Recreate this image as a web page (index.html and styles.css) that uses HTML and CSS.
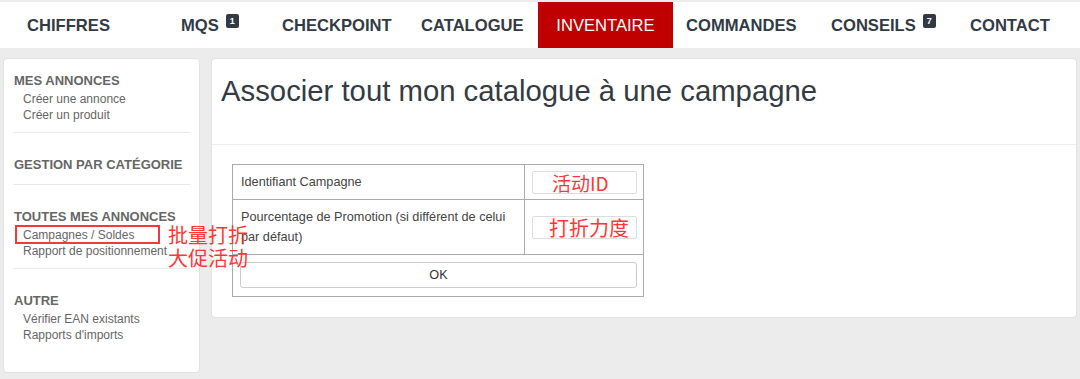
FILE: index.html
```html
<!DOCTYPE html>
<html lang="fr">

<head>
    <meta charset="UTF-8">
    <title>Inventaire - Campagnes</title>
    <link rel="stylesheet" href="styles.css">
</head>

<body>
    <nav class="top-nav">
        <a class="nav-item nav-chiffres" href="#">CHIFFRES</a>
        <a class="nav-item nav-mqs" href="#">MQS <span class="badge">1</span></a>
        <a class="nav-item nav-checkpoint" href="#">CHECKPOINT</a>
        <a class="nav-item nav-catalogue" href="#">CATALOGUE</a>
        <a class="nav-item nav-inventaire active" href="#">INVENTAIRE</a>
        <a class="nav-item nav-commandes" href="#">COMMANDES</a>
        <a class="nav-item nav-conseils" href="#">CONSEILS <span class="badge">7</span></a>
        <a class="nav-item nav-contact" href="#">CONTACT</a>
    </nav>

    <div class="page">
        <aside class="sidebar">
            <div class="side-section first">
                <h4>MES ANNONCES</h4>
                <a href="#">Créer une annonce</a>
                <a href="#">Créer un produit</a>
            </div>
            <div class="side-section">
                <h4>GESTION PAR CATÉGORIE</h4>
            </div>
            <div class="side-section">
                <h4>TOUTES MES ANNONCES</h4>
                <a class="marked" href="#">Campagnes / Soldes
                    <!-- annotation added on the screenshot -->
                    <span class="mark-box"></span>
                    <span class="mark-note">批量打折<br>大促活动</span>
                </a>
                <a href="#">Rapport de positionnement</a>
            </div>
            <div class="side-section last">
                <h4>AUTRE</h4>
                <a href="#">Vérifier EAN existants</a>
                <a href="#">Rapports d'imports</a>
            </div>
        </aside>

        <main class="panel">
            <div class="panel-head">
                <h1>Associer tout mon catalogue à une campagne</h1>
            </div>
            <div class="panel-body">
                <table class="form-table">
                    <tr class="row-id">
                        <td class="label">Identifiant Campagne</td>
                        <td class="field"><div class="fake-input"><span class="hint hint-id">活动ID</span></div></td>
                    </tr>
                    <tr class="row-promo">
                        <td class="label">Pourcentage de Promotion (si différent de celui par défaut)</td>
                        <td class="field"><div class="fake-input"><span class="hint">打折力度</span></div></td>
                    </tr>
                    <tr>
                        <td class="submit" colspan="2"><button type="submit">OK</button></td>
                    </tr>
                </table>
            </div>
        </main>
    </div>
</body>

</html>
```

FILE: styles.css
```css
body {
    margin: 0;
    background: #ececec;
    font-family: "Liberation Sans", Arial, sans-serif;
    color: #333;
}

a {
    text-decoration: none;
}

/* top menu */
.top-nav {
    display: flex;
    align-items: stretch;
    height: 46px;
    margin-top: 2px;
    padding-left: 27px;
    background: #fff;
}

.nav-item {
    display: flex;
    align-items: center;
    padding-top: 1px;
    font-size: 16.6px;
    font-weight: bold;
    color: #323b45;
    white-space: nowrap;
}

.nav-chiffres { width: 154px; }
.nav-mqs { width: 101px; }
.nav-checkpoint { width: 139px; }
.nav-catalogue { width: 117px; }
.nav-commandes { width: 145px; padding-left: 13px; }
.nav-conseils { width: 139px; }

.nav-item.active {
    width: 135px;
    justify-content: center;
    font-weight: normal;
    font-size: 16.6px;
    color: #fff;
    background: #c00000;
}

.badge {
    display: inline-block;
    align-self: flex-start;
    margin: 11px 0 0 7px;
    width: 13px;
    height: 14px;
    line-height: 14px;
    border-radius: 2px;
    background: #323b45;
    color: #fff;
    font-size: 9px;
    text-align: center;
}

/* page */
.page {
    display: flex;
    align-items: flex-start;
    gap: 11px;
    padding: 10px 3px;
}

.sidebar {
    position: relative;
    width: 177px;
    flex-shrink: 0;
    padding: 0 9px 20px 9px;
    background: #fff;
    border: 1px solid #e2e2e2;
    border-radius: 4px;
    box-sizing: content-box;
}

.side-section {
    padding: 24px 0 9px;
    border-bottom: 1px solid #e8e8e8;
}

.side-section.first {
    padding-top: 14px;
}

.side-section.last {
    border-bottom: none;
}

.side-section h4 {
    margin: 0 0 2px 1px;
    font-size: 13px;
    line-height: 16px;
    color: #666;
}

.side-section a {
    display: block;
    padding-left: 10px;
    font-size: 12px;
    line-height: 16px;
    color: #666;
    white-space: nowrap;
}

.side-section a.marked {
    position: relative;
}

.mark-box {
    position: absolute;
    left: 2px;
    top: -2px;
    width: 141px;
    height: 15px;
    border: 2px solid #f23a3a;
}

.mark-note {
    position: absolute;
    left: 155px;
    top: -4px;
    font-family: "Noto Sans CJK SC", sans-serif;
    font-size: 20px;
    line-height: 23px;
    color: #ff3636;
}

.panel {
    flex: 1;
    background: #fff;
    border: 1px solid #e2e2e2;
    border-radius: 4px;
}

.panel-head {
    padding: 15px 9px 36px;
    border-bottom: 1px solid #ededed;
}

.panel-head h1 {
    margin: 0;
    font-size: 29.3px;
    font-weight: normal;
    line-height: 34px;
    color: #333b44;
}

.panel-body {
    padding: 19px 20px 20px;
}

.form-table {
    width: 412px;
    border-collapse: collapse;
    font-size: 12.7px;
    color: #444;
}

.form-table td {
    border: 1px solid #aaa;
    line-height: 20px;
}

.form-table td.label {
    width: 275px;
    padding: 7px 8px;
}

.form-table td.field {
    padding: 0 6px 0 7px;
}

.fake-input {
    height: 21px;
    border: 1px solid #ddd;
    border-radius: 2px;
}

.hint {
    display: block;
    padding-left: 16px;
    font-family: "Noto Sans CJK SC", sans-serif;
    font-size: 20px;
    line-height: 22px;
    color: #ff3636;
    white-space: nowrap;
}

.hint-id {
    padding-left: 19px;
    font-size: 19px;
}

.form-table td.submit {
    padding: 7px 6px 8px 7px;
}

.submit button {
    display: block;
    width: 100%;
    height: 26px;
    background: #fff;
    border: 1px solid #ccc;
    border-radius: 3px;
    font-family: "Liberation Sans", Arial, sans-serif;
    font-size: 12.7px;
    color: #333;
}
```
